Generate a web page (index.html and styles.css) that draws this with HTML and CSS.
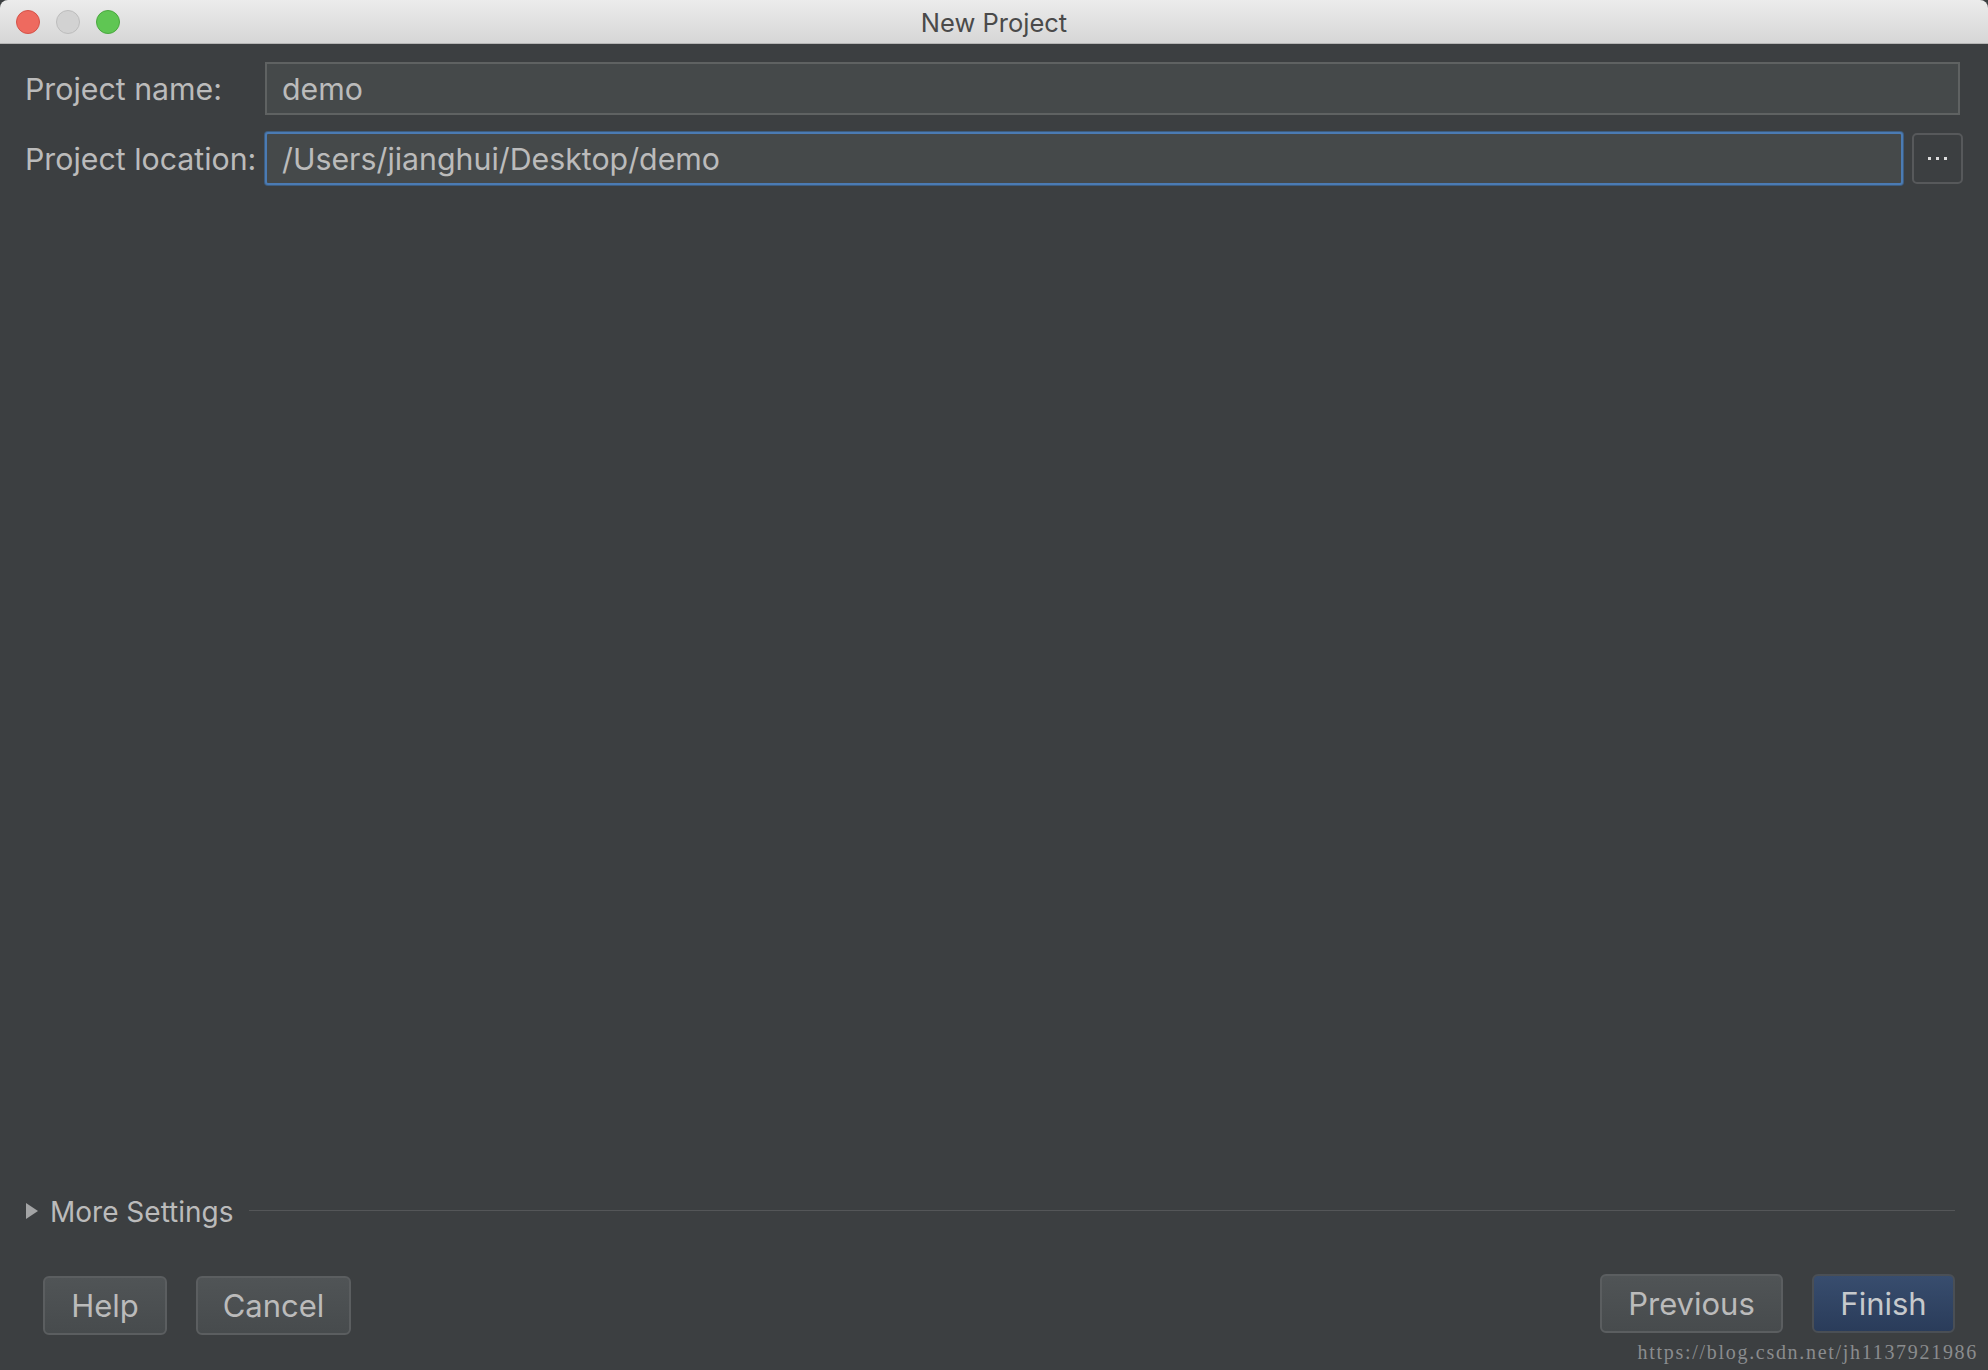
FILE: index.html
```html
<!DOCTYPE html>
<html>
<head>
<meta charset="utf-8">
<title>New Project</title>
<link rel="stylesheet" href="styles.css">
</head>
<body>
<div class="window">
  <div class="titlebar">
    <div class="lights">
      <span class="light red"></span>
      <span class="light gray"></span>
      <span class="light green"></span>
    </div>
    <div class="title">New Project</div>
  </div>
  <div class="content">
    <div class="form">
      <label class="label">Project name:</label>
      <div class="field">demo</div>
      <label class="label">Project location:</label>
      <div class="field-row">
        <div class="field focused">/Users/jianghui/Desktop/demo</div>
        <div class="browse"><span class="dot"></span><span class="dot"></span><span class="dot"></span></div>
      </div>
    </div>
    <div class="spacer"></div>
    <div class="more">
      <span class="tri"></span>
      <span class="more-text">More Settings</span>
      <span class="more-line"></span>
    </div>
    <div class="buttons">
      <div class="btn-group">
        <div class="btn help">Help</div>
        <div class="btn cancel">Cancel</div>
      </div>
      <div class="btn-group">
        <div class="btn previous">Previous</div>
        <div class="btn primary finish">Finish</div>
      </div>
    </div>
  </div>
  <div class="watermark">https://blog.csdn.net/jh1137921986</div>
</div>
</body>
</html>
```
FILE: styles.css
```css
* { box-sizing: border-box; }
html, body { margin: 0; padding: 0; }
body {
  width: 1988px;
  height: 1370px;
  overflow: hidden;
  background: #3c3f41;
  font-family: Inter, "Liberation Sans", Arial, sans-serif;
}
.window {
  position: relative;
  width: 1988px;
  height: 1370px;
  display: flex;
  flex-direction: column;
  background: #3c3f41;
}
.titlebar {
  height: 44px;
  flex: 0 0 44px;
  background: linear-gradient(#ececec, #d6d6d6);
  border-bottom: 1px solid #b5b5b5;
  border-radius: 8px 8px 0 0;
  display: flex;
  align-items: center;
  justify-content: center;
  position: relative;
}
.lights {
  position: absolute;
  left: 16px;
  top: 10px;
  display: flex;
  gap: 16px;
}
.light {
  width: 24px;
  height: 24px;
  border-radius: 50%;
  display: block;
}
.light.red { background: #ee6a5f; border: 1px solid #d55248; }
.light.gray { background: #d2d2d2; border: 1px solid #bdbdbd; }
.light.green { background: #5fc653; border: 1px solid #4aa83f; }
.title {
  color: #4a4a4a;
  font-size: 25.5px;
  margin-top: 2px;
}
.content {
  flex: 1;
  display: flex;
  flex-direction: column;
  padding: 18px 25px 35px 25px;
}
.form {
  display: grid;
  grid-template-columns: 240px 1fr;
  row-gap: 17px;
  align-items: center;
}
.label {
  color: #bbbbbb;
  font-size: 30.3px;
  white-space: nowrap;
}
.field {
  height: 53px;
  background: #45494a;
  border: 2px solid #5f6262;
  color: #bbbbbb;
  font-size: 30.3px;
  display: flex;
  align-items: center;
  padding-left: 15px;
  margin-right: 3px;
}
.field-row {
  display: flex;
  align-items: center;
  gap: 9px;
}
.field.focused {
  flex: 1;
  margin-right: 0;
  border: 2px solid #4b7bb3;
  border-radius: 3px;
  box-shadow: 0 0 0 1px #3d5d80;
}
.browse {
  width: 51px;
  height: 51px;
  border: 2px solid #57595b;
  border-radius: 5px;
  display: flex;
  align-items: center;
  justify-content: center;
  gap: 5px;
}
.dot {
  width: 3px;
  height: 3px;
  background: #dddddd;
  display: block;
}
.spacer { flex: 1; }
.more {
  display: flex;
  align-items: center;
  height: 32px;
}
.tri {
  width: 0;
  height: 0;
  border-top: 8px solid transparent;
  border-bottom: 8px solid transparent;
  border-left: 12px solid #a3a4a5;
  margin-left: 1px;
  margin-right: 12px;
}
.more-text {
  color: #bbbbbb;
  font-size: 28px;
  margin-top: 2px;
}
.more-line {
  flex: 1;
  height: 1px;
  background: #545658;
  margin-left: 15px;
  margin-right: 8px;
  margin-top: -2px;
}
.buttons {
  margin-top: 49px;
  display: flex;
  justify-content: space-between;
  padding: 0 8px 0 18px;
}
.btn-group {
  display: flex;
  gap: 29px;
}
.btn {
  height: 59px;
  border: 2px solid #5b5e60;
  border-radius: 6px;
  background: linear-gradient(#505456, #474b4d);
  color: #bbbbbb;
  font-size: 31px;
  display: flex;
  align-items: center;
  justify-content: center;
}
.help { width: 124px; }
.cancel { width: 155px; }
.previous { width: 183px; margin-top: -2px; }
.finish { width: 143px; margin-top: -2px; }
.btn.primary {
  background: linear-gradient(#384d6e, #2a3c5a);
  border-color: #4a4f55;
  color: #c6c9cc;
}
.watermark {
  position: absolute;
  right: 10px;
  bottom: 6px;
  font-family: "Liberation Serif", "Times New Roman", serif;
  font-size: 20px;
  letter-spacing: 1.7px;
  color: #8a8c8e;
}
```
